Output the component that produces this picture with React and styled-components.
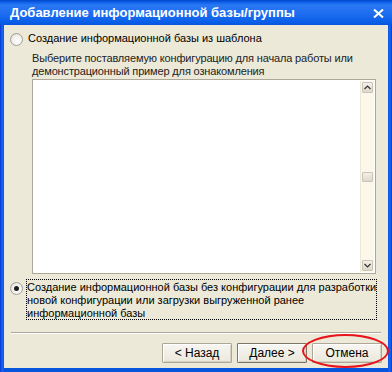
import React from "react";
import styled, { createGlobalStyle } from "styled-components";

const GlobalStyle = createGlobalStyle`
  html, body {
    margin: 0;
    padding: 0;
    background: #ffffff;
  }
`;

const Window = styled.div`
  position: relative;
  width: 392px;
  height: 372px;
  box-sizing: border-box;
  display: flex;
  flex-direction: column;
  background: linear-gradient(to right, #0831d9 0, #166aee 2px, #0855dd 4px, #0855dd 388px, #166aee 390px, #0831d9 392px);
  padding: 0 4px 4px 4px;
  font-family: "Liberation Sans", Arial, sans-serif;
  font-size: 11px;
  color: #000;
`;

const TitleBar = styled.div`
  height: 25px;
  margin: 0 -4px;
  padding: 0 8px 0 10px;
  display: flex;
  align-items: center;
  justify-content: space-between;
  background: linear-gradient(to bottom, #0047c5 0, #0a5ee8 2px, #2a78f2 5px, #1e6df0 14px, #0a5ee8 22px, #0855dd 25px);
  color: #fff;
  font-family: "Liberation Sans", Arial, sans-serif;
  font-weight: bold;
  font-size: 13px;
`;

const CloseGlyph = styled.svg`
  width: 11px;
  height: 9px;
  margin-top: 1px;
`;

const Body = styled.div`
  flex: 1;
  background: #ece9d8;
  padding: 6px 6px 0 6px;
  display: flex;
  flex-direction: column;
`;

const Option = styled.div`
  display: flex;
  align-items: flex-start;
  gap: ${(p) => p.$gap}px;
  margin: ${(p) => p.$margin || "0"};
`;

const Radio = styled.span`
  flex: none;
  width: 13px;
  height: 13px;
  margin-top: ${(p) => p.$top}px;
  box-sizing: border-box;
  border-radius: 50%;
  border: 1px solid #a0a0a0;
  background: radial-gradient(circle at 60% 60%, #ffffff 0, #f4f3ee 45%, #d6d3c6 100%);
  display: flex;
  align-items: center;
  justify-content: center;
  &::after {
    content: "";
    width: 5px;
    height: 5px;
    border-radius: 50%;
    background: ${(p) => (p.$checked ? "#1c1c1c" : "transparent")};
  }
`;

const Label = styled.div`
  line-height: 13px;
  padding-top: 1px;
`;

const FocusLabel = styled.div`
  flex: 1;
  line-height: 13px;
  padding: 1px 0;
  border: 1px dotted #000;
  height: 41px;
  box-sizing: border-box;
  white-space: nowrap;
`;

const Description = styled.div`
  margin: 6px 0 0 22px;
  line-height: 13px;
  color: #222;
  letter-spacing: -0.15px;
`;

const ListBox = styled.div`
  margin: 1px 6px 0 22px;
  height: 195px;
  box-sizing: border-box;
  border: 1px solid #aca899;
  background: #fff;
  display: flex;
  justify-content: flex-end;
  padding: 1px;
`;

const ScrollBar = styled.div`
  width: 13px;
  background: #fdf7ea;
  border-left: 1px solid #efe8d8;
  display: flex;
  flex-direction: column;
  justify-content: space-between;
  align-items: center;
  padding: 1px 0;
`;

const ScrollButton = styled.div`
  width: 11px;
  height: 11px;
  box-sizing: border-box;
  border: 1px solid #c8c3b4;
  border-radius: 1px;
  background: linear-gradient(to bottom, #f2f0e8, #dcd8cb);
  display: flex;
  align-items: center;
  justify-content: center;
`;

const Thumb = styled(ScrollButton)`
  height: 10px;
`;

const Separator = styled.div`
  margin: 12px 1px 0 1px;
  height: 1px;
  background: #aca899;
  border-bottom: 1px solid #fff;
`;

const ButtonRow = styled.div`
  display: flex;
  justify-content: flex-end;
  gap: 5px;
  margin-top: 9px;
`;

const Button = styled.button`
  width: 70px;
  height: 20px;
  box-sizing: border-box;
  font-family: "Liberation Sans", Arial, sans-serif;
  font-size: 12px;
  color: #000;
  background: linear-gradient(to bottom, #f7f6f1, #ebe8dc);
  border: 1px solid ${(p) => (p.$default ? "#7b7667" : "#aca899")};
  box-shadow: inset 1px 1px 0 #fff, inset -1px -1px 0 #d4d0c2;
  border-radius: 1px;
  padding: 0;
`;

const Annotation = styled.div`
  position: absolute;
  left: 302px;
  top: 334px;
  width: 87px;
  height: 34px;
  box-sizing: border-box;
  border: 2px solid #e8141b;
  border-radius: 50%;
  pointer-events: none;
`;

const Chevron = ({ up }) => (
  <svg width="7" height="5" viewBox="0 0 7 5">
    <path d={up ? "M0.5 4 L3.5 1 L6.5 4" : "M0.5 1 L3.5 4 L6.5 1"} stroke="#333" strokeWidth="1.2" fill="none" />
  </svg>
);

export default function App() {
  return (
    <>
      <GlobalStyle />
      <Window>
        <TitleBar>
          <span>Добавление информационной базы/группы</span>
          <CloseGlyph viewBox="0 0 11 9">
            <path d="M1 0.5 L10 8.5 M10 0.5 L1 8.5" stroke="#fff" strokeWidth="2" />
          </CloseGlyph>
        </TitleBar>
        <Body>
          <Option $gap={5}>
            <Radio $top={2} />
            <Label>Создание информационной базы из шаблона</Label>
          </Option>
          <Description>
            Выберите поставляемую конфигурацию для начала работы или
            <br />
            демонстрационный пример для ознакомления
          </Description>
          <ListBox>
            <ScrollBar>
              <ScrollButton>
                <Chevron up />
              </ScrollButton>
              <Thumb />
              <ScrollButton>
                <Chevron />
              </ScrollButton>
            </ScrollBar>
          </ListBox>
          <Option $gap={3} $margin="5px 6px 0 0">
            <Radio $top={3} $checked />
            <FocusLabel>
              Создание информационной базы без конфигурации для разработки
              <br />
              новой конфигурации или загрузки выгруженной ранее
              <br />
              информационной базы
            </FocusLabel>
          </Option>
          <Separator />
          <ButtonRow>
            <Button>&lt; Назад</Button>
            <Button $default>Далее &gt;</Button>
            <Button>Отмена</Button>
          </ButtonRow>
        </Body>
        <Annotation />
      </Window>
    </>
  );
}
